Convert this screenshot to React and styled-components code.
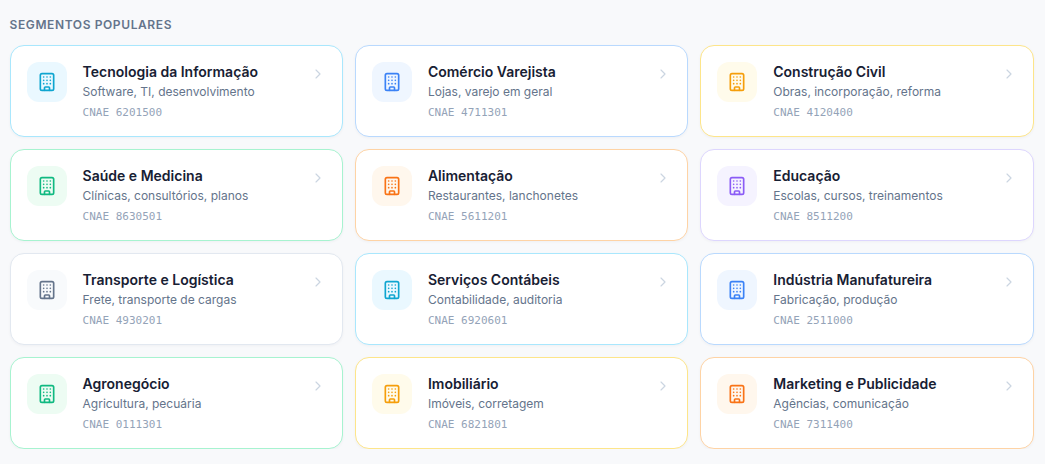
import React from 'react';
import styled, { createGlobalStyle } from 'styled-components';
import { Building, ChevronRight } from 'lucide-react';

const GlobalStyle = createGlobalStyle`
  html, body {
    margin: 0;
    padding: 0;
    background: #f8f9fb;
    font-family: Inter, "Noto Sans", sans-serif;
  }
  * { box-sizing: border-box; }
`;

const Page = styled.div`
  padding: 16px 11.4px 0 9.6px;
`;

const Heading = styled.h2`
  margin: 0 0 12px;
  font-size: 12px;
  line-height: 17px;
  font-weight: 600;
  letter-spacing: 0.6px;
  text-transform: uppercase;
  color: #64748b;
`;

const Grid = styled.div`
  display: grid;
  grid-template-columns: repeat(3, 1fr);
  gap: 12px;
`;

const Card = styled.div`
  display: flex;
  align-items: flex-start;
  gap: 16px;
  height: 92px;
  padding: 16px;
  background: #fff;
  border: 1px solid ${p => p.$border};
  border-radius: 14px;
  box-shadow: 0 1px 3px rgba(15, 23, 42, 0.04);
`;

const IconBox = styled.div`
  display: flex;
  align-items: center;
  justify-content: center;
  flex: none;
  width: 40px;
  height: 40px;
  border-radius: 12px;
  background: ${p => p.$bg};
  color: ${p => p.$color};
`;

const Body = styled.div`
  flex: 1;
  min-width: 0;
`;

const Title = styled.div`
  font-size: 14px;
  line-height: 20px;
  font-weight: 600;
  color: #172033;
`;

const Desc = styled.div`
  margin-top: 1px;
  font-size: 12px;
  line-height: 18px;
  color: #64748b;
`;

const Code = styled.div`
  margin-top: 3px;
  font-family: "DejaVu Sans Mono", monospace;
  font-size: 11px;
  line-height: 17px;
  color: #94a3b8;
`;

const Arrow = styled(ChevronRight)`
  flex: none;
  margin-top: 4px;
  color: #cbd5e1;
`;

const sky = { border: '#a9e7fd', bg: '#eaf8ff', color: '#0ea5d0' };
const blue = { border: '#b9d9fe', bg: '#eff6ff', color: '#3b82f6' };
const amber = { border: '#fde58a', bg: '#fffbeb', color: '#f59e0b' };
const green = { border: '#a7f3d0', bg: '#edfcf3', color: '#10b981' };
const orange = { border: '#fed3a5', bg: '#fff7ed', color: '#f97316' };
const violet = { border: '#ddd6fe', bg: '#f5f3ff', color: '#8b5cf6' };
const slate = { border: '#e2e8f0', bg: '#f8fafc', color: '#64748b' };

const segments = [
  { title: 'Tecnologia da Informação', desc: 'Software, TI, desenvolvimento', cnae: '6201500', tone: sky },
  { title: 'Comércio Varejista', desc: 'Lojas, varejo em geral', cnae: '4711301', tone: blue },
  { title: 'Construção Civil', desc: 'Obras, incorporação, reforma', cnae: '4120400', tone: amber },
  { title: 'Saúde e Medicina', desc: 'Clínicas, consultórios, planos', cnae: '8630501', tone: green },
  { title: 'Alimentação', desc: 'Restaurantes, lanchonetes', cnae: '5611201', tone: orange },
  { title: 'Educação', desc: 'Escolas, cursos, treinamentos', cnae: '8511200', tone: violet },
  { title: 'Transporte e Logística', desc: 'Frete, transporte de cargas', cnae: '4930201', tone: slate },
  { title: 'Serviços Contábeis', desc: 'Contabilidade, auditoria', cnae: '6920601', tone: sky },
  { title: 'Indústria Manufatureira', desc: 'Fabricação, produção', cnae: '2511000', tone: blue },
  { title: 'Agronegócio', desc: 'Agricultura, pecuária', cnae: '0111301', tone: green },
  { title: 'Imobiliário', desc: 'Imóveis, corretagem', cnae: '6821801', tone: amber },
  { title: 'Marketing e Publicidade', desc: 'Agências, comunicação', cnae: '7311400', tone: orange },
];

const App = () => (
  <Page>
    <GlobalStyle />
    <Heading>Segmentos populares</Heading>
    <Grid>
      {segments.map(s => (
        <Card key={s.cnae} $border={s.tone.border}>
          <IconBox $bg={s.tone.bg} $color={s.tone.color}>
            <Building size={20} strokeWidth={2} />
          </IconBox>
          <Body>
            <Title>{s.title}</Title>
            <Desc>{s.desc}</Desc>
            <Code>CNAE {s.cnae}</Code>
          </Body>
          <Arrow size={16} strokeWidth={1.75} />
        </Card>
      ))}
    </Grid>
  </Page>
);

export default App;
